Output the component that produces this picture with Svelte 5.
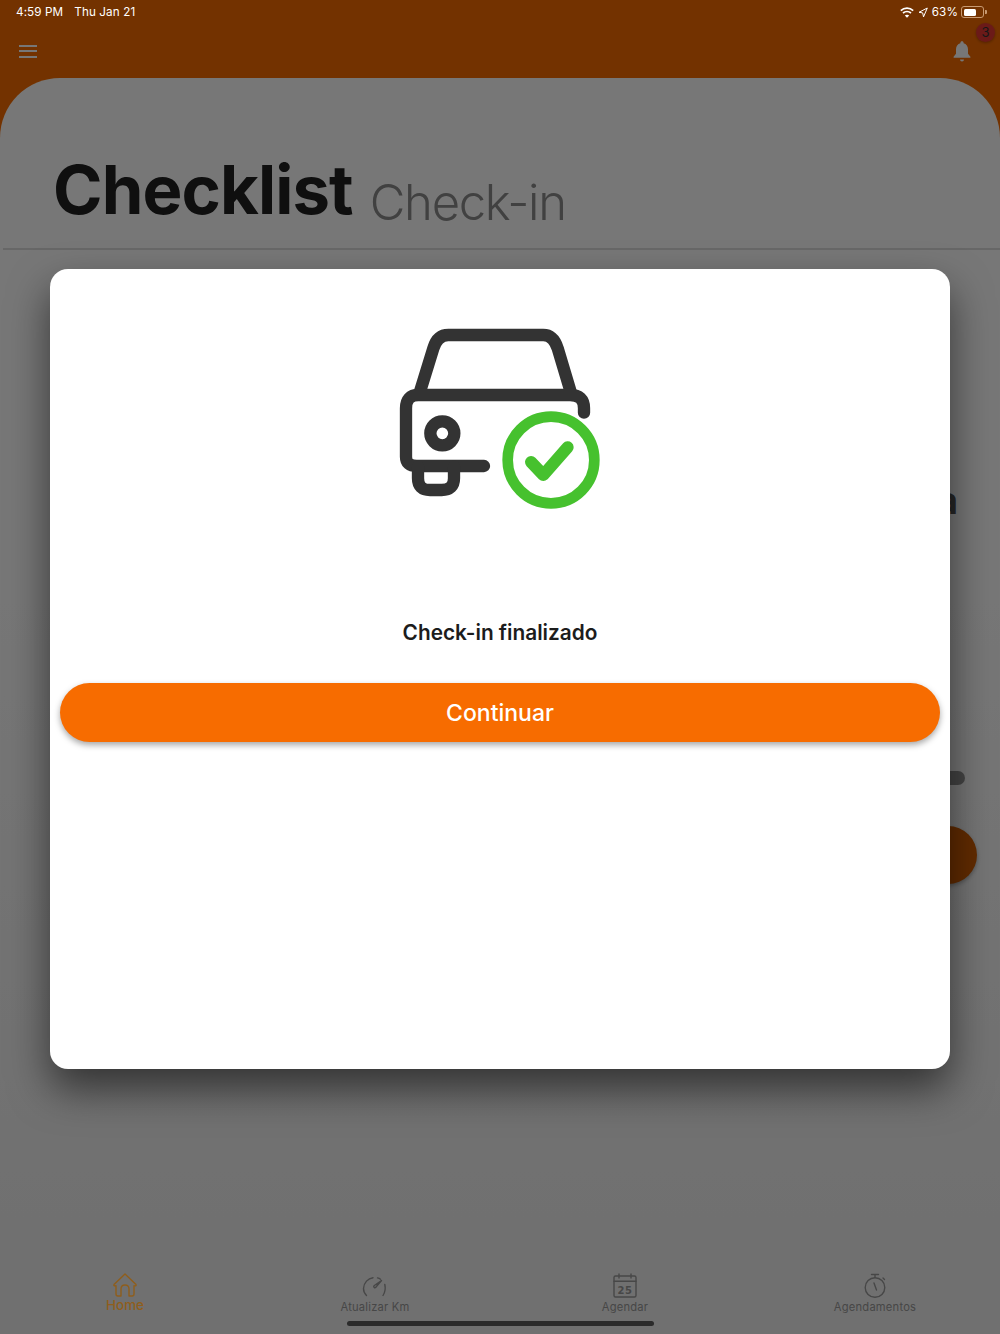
<script>
  const tabs = [
    { id: "home", label: "Home" },
    { id: "km", label: "Atualizar Km" },
    { id: "agendar", label: "Agendar" },
    { id: "agendamentos", label: "Agendamentos" },
  ];
</script>

<div class="page">
  <header class="topbar">
    <button class="menu" type="button" aria-label="Menu">
      <span></span><span></span><span></span>
    </button>
    <div class="bell">
      <svg width="20" height="22" viewBox="0 0 20 22">
        <path d="M10 1.2c1 0 1.6.7 1.6 1.6v.4c2.800.7 4.400 3 4.400 6v4.600l2.400 2.900v1H1.600v-1L4 13.800V9.200c0-3 1.600-5.300 4.400-6v-.4c0-.9.6-1.600 1.600-1.600z" fill="#fff" />
        <path d="M8 19.400h4a2 2 0 0 1-4 0z" fill="#fff" />
      </svg>
      <span class="badge">3</span>
    </div>
  </header>

  <main class="sheet">
    <div class="heading">
      <h1>Checklist</h1>
      <span class="sub">Check-in</span>
    </div>
    <div class="body">
      <div class="peek-title">a</div>
      <div class="peek-pill"></div>
      <div class="fab"></div>
    </div>
  </main>

  <nav class="tabs">
    {#each tabs as tab}
      <div class="tab" class:active={tab.id === "home"}>
        {#if tab.id === "home"}
          <svg width="26" height="26" viewBox="0 0 26 26" fill="none" stroke="currentColor" stroke-width="1.400" stroke-linecap="round" stroke-linejoin="round">
            <path d="M2 12.500 13 2l11 10.500c.5.900-.3 1.700-2 1.300V22c0 1.300-.8 2-2 2h-3V17c0-2.500-1.600-4-4-4s-4 1.500-4 4v7H6c-1.200 0-2-.7-2-2v-8.200c-1.700.4-2.500-.4-2-1.300z" />
          </svg>
        {:else if tab.id === "km"}
          <svg width="26" height="26" viewBox="0 0 26 26" fill="none" stroke="currentColor" stroke-width="1.400" stroke-linecap="round" stroke-linejoin="round">
            <path d="M4.500 22.500C2.400 20.400 1.500 17.800 1.500 15.500 1.800 9.600 6 5.400 11 4.700" />
            <path d="M15.500 4.900c1.200.3 2.200.7 3 1.300" />
            <path d="M22.800 11.500c.9 3.900.2 7.800-1.800 11" />
            <path d="M19.500 7.500 13.800 14.300c-1 1.100-2.700-.3-1.800-1.500z" />
          </svg>
        {:else if tab.id === "agendar"}
          <svg width="26" height="26" viewBox="0 0 26 26" fill="none" stroke="currentColor" stroke-width="1.400" stroke-linecap="round" stroke-linejoin="round">
            <rect x="2" y="3" width="22" height="21" rx="1.500" />
            <path d="M2 8.200h22M7 1v4M19 1v4" />
            <text class="day" x="13" y="20.500" text-anchor="middle">25</text>
          </svg>
        {:else}
          <svg width="26" height="26" viewBox="0 0 26 26" fill="none" stroke="currentColor" stroke-width="1.400" stroke-linecap="round" stroke-linejoin="round">
            <circle cx="13" cy="14.500" r="9.800" />
            <path d="M9.500 1.500h7M13 1.500v3M21 5l1.500 1.500M12 10l2.500 7" />
          </svg>
        {/if}
        <span>{tab.label}</span>
      </div>
    {/each}
    <div class="home-indicator"></div>
  </nav>

  <div class="overlay">
    <section class="modal">
      <svg class="car" width="240" height="210" viewBox="0 0 720 630" fill="none" stroke-linecap="round" stroke-linejoin="round">
        <g stroke="#333333" stroke-width="37">
          <path d="M120 245 160 115Q172 75 205 75H490Q520 75 533 115L572 245" />
          <path d="M612 308V295Q612 255 570 255H115Q78 255 78 295V440Q78 468 110 468H312" />
          <path d="M114 470V505Q114 540 150 540H185Q222 540 222 505V470" />
          <circle cx="187" cy="370" r="36" />
        </g>
        <g stroke="#46c12e">
          <circle cx="513" cy="450" r="130" stroke-width="32" />
          <path d="M453 456 490 495 563 412" stroke-width="36" />
        </g>
      </svg>
      <p class="message">Check-in finalizado</p>
      <button class="continue" type="button">Continuar</button>
    </section>
  </div>

  <div class="status">
    <div class="clock"><span>4:59 PM</span><span>Thu Jan 21</span></div>
    <div class="indicators">
      <svg width="14" height="11" viewBox="0 0 14 11" fill="none" stroke="#fff" stroke-width="1.700">
        <path d="M.8 3.600c3.500-3.200 8.900-3.200 12.400 0" />
        <path d="M3 6c2.300-2 5.700-2 8 0" />
        <path d="M7 10.800 4.800 8.400c1.200-1 3.200-1 4.400 0z" fill="#fff" stroke="none" />
      </svg>
      <svg width="10" height="11" viewBox="0 0 10 11" fill="none" stroke="#fff" stroke-width="1" stroke-linejoin="round">
        <path d="M9.300 1 1 5.300l3.700.6.800 4z" />
      </svg>
      <span class="pct">63%</span>
      <div class="battery"><div class="level"></div></div>
    </div>
  </div>
</div>

<style>
  :global(body) {
    margin: 0;
  }
  .page {
    position: relative;
    width: 1000px;
    height: 1334px;
    display: flex;
    flex-direction: column;
    overflow: hidden;
    background: #f76c00;
    font-family: Inter, "Liberation Sans", sans-serif;
  }
  .topbar {
    height: 78px;
    flex: none;
    box-sizing: border-box;
    padding: 24px 28px 0 19px;
    display: flex;
    justify-content: space-between;
    align-items: center;
  }
  .menu {
    display: flex;
    flex-direction: column;
    gap: 3.500px;
    width: 18px;
    padding: 0;
    border: 0;
    background: none;
  }
  .menu span {
    height: 2px;
    background: #fff;
  }
  .bell {
    position: relative;
    display: flex;
  }
  .badge {
    position: absolute;
    top: -17px;
    left: 24px;
    width: 19px;
    height: 19px;
    border-radius: 50%;
    background: #e53935;
    color: #333;
    font-size: 13px;
    line-height: 19px;
    text-align: center;
    box-shadow: 0 1px 3px rgba(0, 0, 0, 0.3);
  }
  .sheet {
    flex: 1;
    display: flex;
    flex-direction: column;
    background: linear-gradient(#fff 40%, #f0f0f0);
    border-radius: 60px 60px 0 0;
  }
  .heading {
    height: 172px;
    flex: none;
    box-sizing: border-box;
    margin-left: 3px;
    padding: 69px 0 0 50px;
    display: flex;
    align-items: flex-end;
    gap: 17px;
    border-bottom: 2px solid #dcdcdc;
  }
  h1 {
    margin: 0 0 15px;
    font-size: 67px;
    line-height: 86px;
    font-weight: 700;
    letter-spacing: -0.9px;
    color: #222;
  }
  .sub {
    margin-bottom: 14px;
    font-size: 49px;
    line-height: 62px;
    font-weight: 300;
    letter-spacing: -1.300px;
    color: #8c8c8c;
  }
  .body {
    flex: 1;
    position: relative;
  }
  .peek-title {
    position: absolute;
    top: 227px;
    right: 42px;
    font-size: 38px;
    font-weight: 700;
    color: #555;
  }
  .peek-pill {
    position: absolute;
    top: 521px;
    right: 35px;
    width: 60px;
    height: 14px;
    border-radius: 7px;
    background: #939393;
  }
  .fab {
    position: absolute;
    top: 576px;
    left: 919px;
    width: 58px;
    height: 58px;
    border-radius: 50%;
    background: #cf5c00;
    box-shadow: 0 2px 4px rgba(0, 0, 0, 0.3);
  }
  .tabs {
    position: relative;
    height: 69px;
    flex: none;
    display: grid;
    grid-template-columns: repeat(4, 250px);
    background: #f0f0f0;
  }
  .tab {
    display: flex;
    flex-direction: column;
    align-items: center;
    padding-top: 8px;
    color: #989898;
    font-size: 11.200px;
    letter-spacing: 0.2px;
  }
  .tab.active {
    position: relative;
    z-index: 2;
    color: #8f5e1c;
    font-size: 13.500px;
    font-weight: 500;
    letter-spacing: 0;
    line-height: 14px;
    padding-top: 7px;
  }
  .tab span {
    margin-top: 1px;
  }
  .tab.active span {
    margin-top: 0;
  }
  .day {
    fill: currentColor;
    stroke: none;
    font-size: 10px;
    font-weight: 700;
    font-family: "DejaVu Sans", sans-serif;
    letter-spacing: 0.5px;
  }
  .home-indicator {
    position: absolute;
    left: 347px;
    bottom: 8px;
    width: 307px;
    height: 5px;
    border-radius: 3px;
    background: #5c5c5c;
  }
  .overlay {
    position: absolute;
    inset: 0;
    box-sizing: border-box;
    padding-top: 4px;
    display: flex;
    align-items: center;
    justify-content: center;
    background: rgba(0, 0, 0, 0.535);
  }
  .modal {
    width: 900px;
    height: 800px;
    box-sizing: border-box;
    padding: 41px 10px 0;
    display: flex;
    flex-direction: column;
    align-items: center;
    background: #fff;
    border-radius: 18px;
    box-shadow: 0 20px 40px rgba(0, 0, 0, 0.55);
  }
  .car {
    flex: none;
  }
  .message {
    margin: 100px 0 0;
    font-size: 20.800px;
    line-height: 26px;
    font-weight: 600;
    color: #1c1c1c;
  }
  .continue {
    width: 100%;
    height: 59px;
    margin-top: 37px;
    border: 0;
    border-radius: 30px;
    background: #f76c00;
    color: #fff;
    font: 500 23px Inter, "Liberation Sans", sans-serif;
    box-shadow: 0 3px 6px rgba(0, 0, 0, 0.35);
  }
  .status {
    position: absolute;
    top: 0;
    left: 0;
    right: 0;
    height: 24px;
    box-sizing: border-box;
    padding: 0 16px;
    display: flex;
    justify-content: space-between;
    align-items: center;
    color: #fff;
    font-size: 11.700px;
    letter-spacing: 0.1px;
  }
  .clock {
    display: flex;
    gap: 11px;
  }
  .indicators {
    display: flex;
    align-items: center;
    gap: 4px;
  }
  .pct {
    font-size: 11.700px;
    margin-right: -1px;
  }
  .battery {
    position: relative;
    box-sizing: border-box;
    width: 23px;
    height: 12px;
    padding: 1.500px;
    border: 1px solid #c89a72;
    border-radius: 3px;
  }
  .level {
    width: 12px;
    height: 100%;
    border-radius: 1.500px;
    background: #fff;
  }
  .battery::after {
    content: "";
    position: absolute;
    top: 3px;
    right: -3.500px;
    width: 1.500px;
    height: 4px;
    border-radius: 0 1px 1px 0;
    background: #c89a72;
  }
</style>
